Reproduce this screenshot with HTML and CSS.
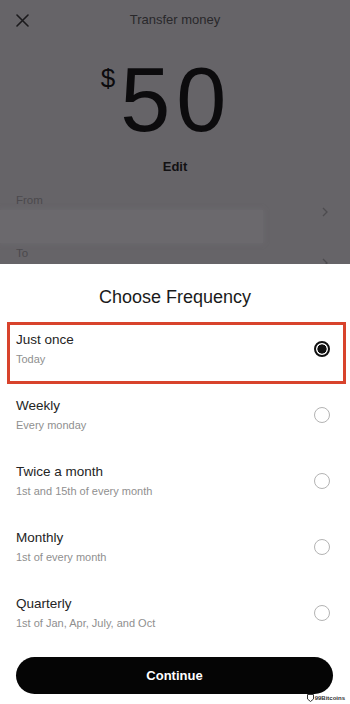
FILE: index.html
```html
<!DOCTYPE html>
<html lang="en">
<head>
<meta charset="utf-8">
<title>Transfer money</title>
<link rel="stylesheet" href="styles.css">
</head>
<body>
<div class="screen">
  <section class="top">
    <header class="header">
      <svg class="close" width="13" height="13" viewBox="0 0 13 13"><path d="M1 1L12 12M12 1L1 12" stroke="#1b1a1c" stroke-width="1.6" stroke-linecap="round"/></svg>
      <div class="header-title">Transfer money</div>
      <div></div>
    </header>
    <div class="amount"><span class="currency">$</span><span class="value">50</span></div>
    <div class="edit">Edit</div>
    <div class="field">
      <div class="field-main">
        <div class="field-label">From</div>
        <div class="field-value"></div>
      </div>
      <svg class="chev" width="6" height="10" viewBox="0 0 6 10"><path d="M1 1L5 5L1 9" fill="none" stroke="#4d4b4f" stroke-width="1.3"/></svg>
    </div>
    <div class="field field-to">
      <div class="field-main">
        <div class="field-label">To</div>
      </div>
      <svg class="chev" width="6" height="10" viewBox="0 0 6 10"><path d="M1 1L5 5L1 9" fill="none" stroke="#4d4b4f" stroke-width="1.3"/></svg>
    </div>
  </section>
  <section class="sheet">
    <h1 class="sheet-title">Choose Frequency</h1>
    <ul class="options">
      <li class="option selected">
        <div class="opt-text"><div class="opt-title">Just once</div><div class="opt-sub">Today</div></div>
        <span class="radio checked"></span>
      </li>
      <li class="option">
        <div class="opt-text"><div class="opt-title">Weekly</div><div class="opt-sub">Every monday</div></div>
        <span class="radio"></span>
      </li>
      <li class="option">
        <div class="opt-text"><div class="opt-title">Twice a month</div><div class="opt-sub">1st and 15th of every month</div></div>
        <span class="radio"></span>
      </li>
      <li class="option">
        <div class="opt-text"><div class="opt-title">Monthly</div><div class="opt-sub">1st of every month</div></div>
        <span class="radio"></span>
      </li>
      <li class="option">
        <div class="opt-text"><div class="opt-title">Quarterly</div><div class="opt-sub">1st of Jan, Apr, July, and Oct</div></div>
        <span class="radio"></span>
      </li>
    </ul>
    <button class="continue">Continue</button>
    <div class="watermark">
      <svg width="7" height="8" viewBox="0 0 7 8"><path d="M0.5 0.5H6.5V5L3.5 7.5L0.5 5Z" fill="#fff" stroke="#333" stroke-width="1"/></svg>
      <span>99Bitcoins</span>
    </div>
  </section>
</div>
</body>
</html>
```

FILE: styles.css
```css
* { box-sizing: border-box; }
html, body { margin: 0; padding: 0; }
body {
  width: 350px;
  height: 704px;
  overflow: hidden;
  font-family: "Liberation Sans", Arial, sans-serif;
  background: #ffffff;
}
.screen { width: 350px; height: 704px; display: flex; flex-direction: column; }

.top {
  height: 264px;
  flex: none;
  background: #666468;
  overflow: hidden;
}
.header {
  height: 40px;
  display: grid;
  grid-template-columns: 1fr auto 1fr;
  align-items: center;
  padding: 0 16px;
}
.close { display: block; }
.header-title {
  font-size: 13px;
  color: #29282b;
  line-height: 16px;
}
.amount {
  margin-top: 15px;
  display: flex;
  justify-content: center;
  align-items: flex-start;
  color: #0c0b0d;
  padding-right: 23px;
}
.currency {
  font-size: 26px;
  line-height: 26px;
  margin-top: 10px;
  margin-right: 5px;
}
.value {
  font-size: 90px;
  line-height: 90px;
  letter-spacing: 6px;
  margin-right: -6px;
}
.edit {
  margin-top: 13px;
  text-align: center;
  font-size: 13px;
  font-weight: 700;
  line-height: 18px;
  color: #121113;
}
.field {
  margin-top: 16px;
  display: flex;
  justify-content: space-between;
  align-items: flex-start;
}
.field-to { margin-top: 2px; }
.field-main { width: 263px; }
.field-label {
  padding-left: 16px;
  font-size: 11.5px;
  line-height: 16px;
  color: #4b494d;
}
.field-value {
  height: 33px;
  margin-top: 2px;
  background: #6b696d;
  box-shadow: 0 0 4px 1px #6b696d;
}
.chev { margin-top: 15px; margin-right: 22px; }
.field-to .chev { margin-top: 13px; }

.sheet {
  flex: 1;
  background: #ffffff;
  position: relative;
  display: flex;
  flex-direction: column;
}
.sheet-title {
  margin: 0;
  padding-top: 21px;
  font-size: 18px;
  font-weight: 400;
  line-height: 24px;
  text-align: center;
  color: #1a1a1a;
}
.options {
  list-style: none;
  margin: 13px 0 0;
  padding: 0;
}
.option {
  position: relative;
  height: 66px;
  padding: 9px 20px 0 16px;
  display: flex;
  justify-content: space-between;
  align-items: flex-start;
}
.option.selected::before {
  content: "";
  position: absolute;
  left: 7px;
  top: 0;
  width: 333px;
  height: 56px;
  border: 3px solid #d8432c;
}
.opt-title {
  font-size: 13.5px;
  line-height: 18px;
  color: #242424;
}
.opt-sub {
  margin-top: 1px;
  font-size: 11px;
  line-height: 18px;
  color: #8f8f8f;
}
.radio {
  width: 16px;
  height: 16px;
  margin-top: 10px;
  border-radius: 50%;
  border: 1.5px solid #b3b3b3;
  background: #fff;
}
.radio.checked {
  border: 2px solid #111;
  background: radial-gradient(circle, #111 0 4.3px, #fff 4.9px);
}
.continue {
  margin: 5px 0 0 16px;
  width: 317px;
  height: 37px;
  border: none;
  border-radius: 19px;
  background: #050505;
  color: #ffffff;
  font-family: "Liberation Sans", Arial, sans-serif;
  font-size: 13px;
  font-weight: 700;
  padding: 0;
}
.watermark {
  position: absolute;
  right: 5px;
  bottom: 2px;
  display: flex;
  align-items: center;
  gap: 1px;
  font-size: 6px;
  font-weight: 700;
  color: #333;
  text-shadow: 0 0 1px #fff, 0 0 1px #fff;
}
```
